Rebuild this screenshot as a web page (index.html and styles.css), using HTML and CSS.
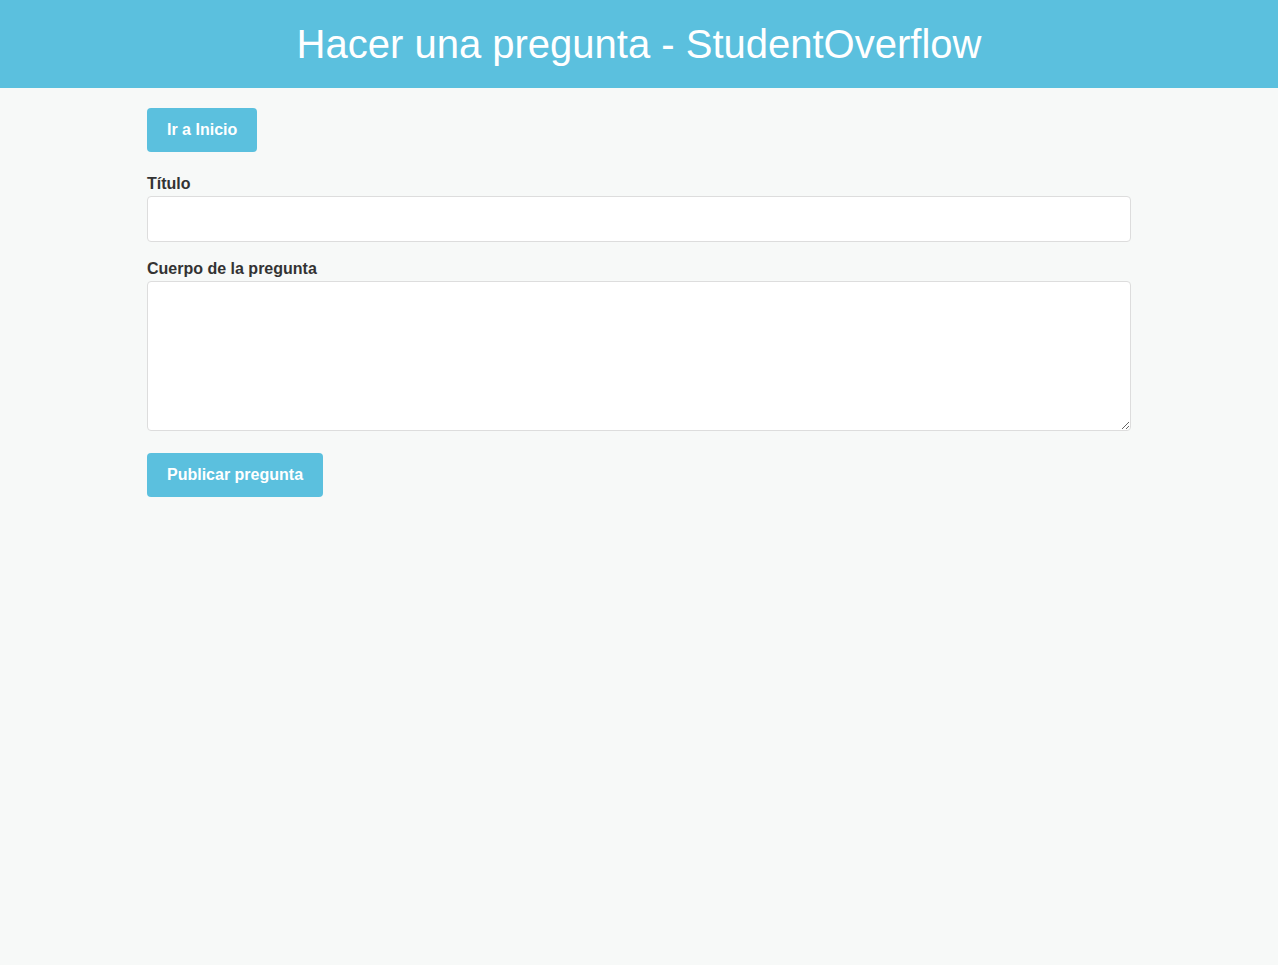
FILE: index.html
```html
<!DOCTYPE html>
<html lang="es">
<head>
<meta charset="utf-8">
<title>Hacer una pregunta - StudentOverflow</title>
<link rel="stylesheet" href="styles.css">
</head>
<body>
<header class="site-header">
  <h1 class="site-title">Hacer una pregunta - StudentOverflow</h1>
</header>
<main class="container">
  <a class="btn" href="#">Ir a Inicio</a>
  <form class="question-form">
    <div class="form-group">
      <label class="form-label" for="titulo">Título</label>
      <input class="form-input" type="text" id="titulo">
    </div>
    <div class="form-group">
      <label class="form-label" for="cuerpo">Cuerpo de la pregunta</label>
      <textarea class="form-textarea" id="cuerpo"></textarea>
    </div>
    <button class="btn btn-submit" type="submit">Publicar pregunta</button>
  </form>
</main>
</body>
</html>
```

FILE: styles.css
```css
* { box-sizing: border-box; }
html, body {
  margin: 0;
  padding: 0;
}
body {
  background: #f7f9f8;
  font-family: "Liberation Sans", Arial, sans-serif;
  color: #333;
  font-size: 16px;
}
.site-header {
  background: #5bc0de;
  height: 88px;
  display: flex;
  align-items: center;
  justify-content: center;
}
.site-title {
  margin: 0;
  color: #fff;
  font-size: 40px;
  font-weight: normal;
  line-height: 46px;
}
.container {
  max-width: 984px;
  margin: 0 auto;
  padding-top: 20px;
}
.btn {
  display: inline-block;
  background: #5bc0de;
  color: #fff;
  font-family: "Liberation Sans", Arial, sans-serif;
  font-size: 16px;
  font-weight: bold;
  line-height: 20px;
  padding: 12px 20px;
  border: none;
  border-radius: 4px;
  text-decoration: none;
  cursor: pointer;
}
.question-form {
  margin-top: 23px;
}
.form-group {
  margin-bottom: 18px;
}
.form-label {
  display: block;
  font-weight: bold;
  color: #333;
  margin-bottom: 3px;
}
.form-input,
.form-textarea {
  display: block;
  width: 100%;
  background: #fff;
  border: 1px solid #ddd;
  border-radius: 4px;
  font-family: "Liberation Sans", Arial, sans-serif;
  font-size: 16px;
  padding: 10px;
  margin: 0;
}
.form-input {
  height: 46px;
}
.form-textarea {
  height: 150px;
  resize: vertical;
}
.btn-submit {
  margin-top: 4px;
}
```
